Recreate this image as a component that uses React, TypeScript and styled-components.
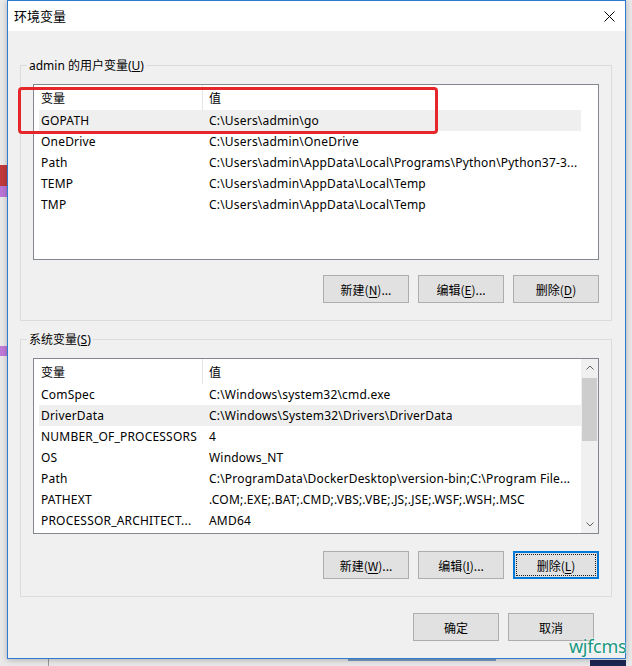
import React from "react";
import styled, { createGlobalStyle, css } from "styled-components";

const Global = createGlobalStyle`
  html, body { margin: 0; padding: 0; }
  body {
    width: 632px;
    height: 666px;
    overflow: hidden;
    font-family: "Noto Sans", "Noto Sans CJK SC", sans-serif;
    font-size: 12px;
    color: #000;
  }
`;

const Desktop = styled.div`
  position: relative;
  width: 632px;
  height: 666px;
  box-sizing: border-box;
  padding: 0 6px 7px 7px;
  display: flex;
  background-color: #e9e9e9;
  background-image:
    linear-gradient(to bottom, transparent 165px, #c1393c 165px, #c1393c 186px, #b976d6 186px, #b976d6 197px, transparent 197px, transparent 346px, #c07ad8 346px, #c07ad8 356px, transparent 356px),
    linear-gradient(#1d2552, #1d2552),
    linear-gradient(#7e9cc0, #7e9cc0),
    linear-gradient(#9a9a9a, #9a9a9a);
  background-size: 7px 666px, 36px 6px, 148px 2px, 1px 7px;
  background-position: 0 0, 590px 660px, 348px 659px, 48px 659px;
  background-repeat: no-repeat;
`;

const Window = styled.div`
  flex: 1;
  display: flex;
  flex-direction: column;
  border: 1px solid #2c7bd0;
  background: #f0f0f0;
  box-shadow: 0 1px 6px rgba(0, 0, 0, 0.25);
`;

const TitleBar = styled.div`
  height: 30px;
  flex: none;
  display: flex;
  align-items: center;
  justify-content: space-between;
  background: #fff;
  padding-left: 6px;
`;

const Title = styled.span`
  font-family: "Noto Sans CJK SC", sans-serif;
  font-size: 13px;
  line-height: 16px;
`;

const CloseButton = styled.div`
  width: 32px;
  height: 30px;
  display: flex;
  align-items: center;
  justify-content: center;
`;

const Body = styled.div`
  flex: 1;
  display: flex;
  flex-direction: column;
  padding: 34px 13px 17px 12px;
`;

const Group = styled.div<{ $gap?: boolean }>`
  position: relative;
  display: flex;
  flex-direction: column;
  border: 1px solid #dcdcdc;
  padding: 0 12px 17px 12px;
  ${(p) => p.$gap && css`margin-top: 18px;`}
`;

const Caption = styled.div`
  align-self: flex-start;
  margin: -8px 0 0 -6px;
  padding: 0 2px;
  height: 16px;
  line-height: 16px;
  background: #f0f0f0;
  font-family: "Noto Sans", "Noto Sans CJK SC", sans-serif;
`;

const List = styled.div`
  margin-top: 10px;
  height: 176px;
  box-sizing: border-box;
  border: 1px solid #828790;
  background: #fff;
  display: flex;
`;

const ListMain = styled.div<{ $reserve?: boolean }>`
  flex: 1;
  min-width: 0;
  padding-left: 5px;
  display: flex;
  flex-direction: column;
  overflow: hidden;
  ${(p) => p.$reserve && css`padding-right: 17px;`}
`;

const HeaderRow = styled.div`
  height: 25px;
  flex: none;
  display: flex;
`;

const HeaderCell = styled.div<{ $first?: boolean }>`
  line-height: 25px;
  white-space: nowrap;
  font-family: "Noto Sans CJK SC", sans-serif;
  ${(p) =>
    p.$first
      ? css`
          width: 164px;
          flex: none;
          box-sizing: border-box;
          padding-left: 2px;
          border-right: 1px solid #e5e5e5;
        `
      : css`
          flex: 1;
          padding-left: 6px;
        `}
`;

const Row = styled.div<{ $selected?: boolean }>`
  height: 21px;
  flex: none;
  display: flex;
  background: ${(p) => (p.$selected ? "#efefef" : "transparent")};
`;

const Cell = styled.div<{ $first?: boolean }>`
  line-height: 21px;
  white-space: nowrap;
  overflow: hidden;
  letter-spacing: 0.2px;
  ${(p) =>
    p.$first
      ? css`
          width: 164px;
          flex: none;
          box-sizing: border-box;
          padding-left: 2px;
        `
      : css`
          flex: 1;
          min-width: 0;
          padding-left: 6px;
        `}
`;

const Scrollbar = styled.div`
  width: 17px;
  flex: none;
  display: flex;
  flex-direction: column;
  background: #f0f0f0;
`;

const ScrollArrow = styled.div`
  height: 17px;
  flex: none;
  display: flex;
  align-items: center;
  justify-content: center;
`;

const Track = styled.div`
  flex: 1;
  padding: 2px 1px 0 1px;
`;

const Thumb = styled.div`
  height: 63px;
  background: #cdcdcd;
`;

const ButtonRow = styled.div<{ $top: number; $right?: number }>`
  display: flex;
  justify-content: flex-end;
  gap: 9px;
  margin-top: ${(p) => p.$top}px;
  padding-right: ${(p) => p.$right ?? 0}px;
`;

const Button = styled.div<{ $focused?: boolean }>`
  position: relative;
  width: 86px;
  height: 28px;
  box-sizing: border-box;
  display: flex;
  align-items: center;
  justify-content: center;
  background: #e1e1e1;
  border: 1px solid #adadad;
  font-family: "Noto Sans CJK SC", sans-serif;
  font-size: 12px;
  ${(p) =>
    p.$focused &&
    css`
      border: 2px solid #0078d7;
      &::after {
        content: "";
        position: absolute;
        inset: 1px;
        border: 1px dotted #222;
      }
    `}
  u {
    text-decoration: underline;
    text-underline-offset: 2px;
  }
`;

const Annotation = styled.div`
  position: absolute;
  left: -3px;
  top: 21px;
  width: 420px;
  height: 47px;
  box-sizing: border-box;
  border: 3px solid #e5262b;
  border-radius: 4px;
  pointer-events: none;
`;

const Watermark = styled.div`
  position: absolute;
  left: 569px;
  top: 635px;
  font-family: "Noto Sans", sans-serif;
  font-size: 18px;
  line-height: 22px;
  letter-spacing: -0.3px;
  color: #17977f;
  text-shadow: 0 0 2px #fff, 0 0 2px #fff;
`;

type Var = [string, string];

const userVars: Var[] = [
  ["GOPATH", "C:\\Users\\admin\\go"],
  ["OneDrive", "C:\\Users\\admin\\OneDrive"],
  ["Path", "C:\\Users\\admin\\AppData\\Local\\Programs\\Python\\Python37-3..."],
  ["TEMP", "C:\\Users\\admin\\AppData\\Local\\Temp"],
  ["TMP", "C:\\Users\\admin\\AppData\\Local\\Temp"],
];

const sysVars: Var[] = [
  ["ComSpec", "C:\\Windows\\system32\\cmd.exe"],
  ["DriverData", "C:\\Windows\\System32\\Drivers\\DriverData"],
  ["NUMBER_OF_PROCESSORS", "4"],
  ["OS", "Windows_NT"],
  ["Path", "C:\\ProgramData\\DockerDesktop\\version-bin;C:\\Program File..."],
  ["PATHEXT", ".COM;.EXE;.BAT;.CMD;.VBS;.VBE;.JS;.JSE;.WSF;.WSH;.MSC"],
  ["PROCESSOR_ARCHITECT...", "AMD64"],
];

const Chevron = ({ up }: { up?: boolean }) => (
  <svg width="8" height="5" viewBox="0 0 8 5">
    <path
      d={up ? "M0.5 4.5 L4 1 L7.5 4.5" : "M0.5 0.5 L4 4 L7.5 0.5"}
      fill="none"
      stroke="#606060"
      strokeWidth="1"
    />
  </svg>
);

function VarList({ rows, selected, scroll }: { rows: Var[]; selected: number; scroll?: boolean }) {
  return (
    <List>
      <ListMain $reserve={!scroll}>
        <HeaderRow>
          <HeaderCell $first>变量</HeaderCell>
          <HeaderCell>值</HeaderCell>
        </HeaderRow>
        {rows.map(([k, v], i) => (
          <Row key={k + i} $selected={i === selected}>
            <Cell $first>{k}</Cell>
            <Cell>{v}</Cell>
          </Row>
        ))}
      </ListMain>
      {scroll && (
        <Scrollbar>
          <ScrollArrow>
            <Chevron up />
          </ScrollArrow>
          <Track>
            <Thumb />
          </Track>
          <ScrollArrow>
            <Chevron />
          </ScrollArrow>
        </Scrollbar>
      )}
    </List>
  );
}

export default function App() {
  return (
    <>
      <Global />
      <Desktop>
        <Window>
          <TitleBar>
            <Title>环境变量</Title>
            <CloseButton>
              <svg width="11" height="11" viewBox="0 0 11 11">
                <path d="M0.5 0.5 L10.5 10.5 M10.5 0.5 L0.5 10.5" stroke="#000" strokeWidth="1" />
              </svg>
            </CloseButton>
          </TitleBar>
          <Body>
            <Group>
              <Caption>
                admin 的用户变量(<u>U</u>)
              </Caption>
              <VarList rows={userVars} selected={0} />
              <ButtonRow $top={15}>
                <Button>
                  <span>
                    新建(<u>N</u>)...
                  </span>
                </Button>
                <Button>
                  <span>
                    编辑(<u>E</u>)...
                  </span>
                </Button>
                <Button>
                  <span>
                    删除(<u>D</u>)
                  </span>
                </Button>
              </ButtonRow>
              <Annotation />
            </Group>
            <Group $gap>
              <Caption>
                系统变量(<u>S</u>)
              </Caption>
              <VarList rows={sysVars} selected={1} scroll />
              <ButtonRow $top={17}>
                <Button>
                  <span>
                    新建(<u>W</u>)...
                  </span>
                </Button>
                <Button>
                  <span>
                    编辑(<u>I</u>)...
                  </span>
                </Button>
                <Button $focused>
                  <span>
                    删除(<u>L</u>)
                  </span>
                </Button>
              </ButtonRow>
            </Group>
            <ButtonRow $top={16} $right={18}>
              <Button>
                <span>确定</span>
              </Button>
              <Button>
                <span>取消</span>
              </Button>
            </ButtonRow>
          </Body>
        </Window>
        <Watermark>wjfcms</Watermark>
      </Desktop>
    </>
  );
}
